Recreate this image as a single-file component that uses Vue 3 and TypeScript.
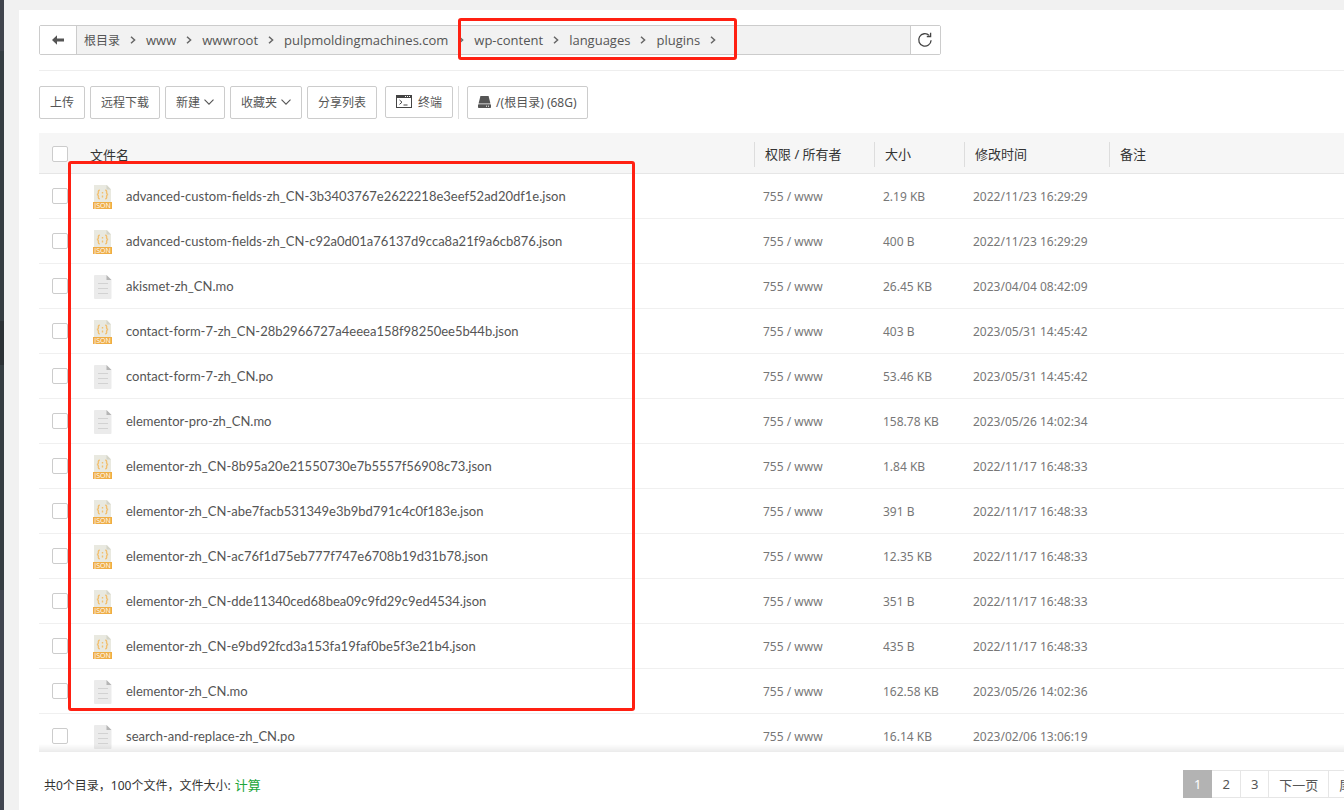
<script setup lang="ts">
import { ref } from 'vue'

interface FileRow {
  name: string
  size: string
  time: string
}

const crumbs: string[] = ['www', 'wwwroot', 'pulpmoldingmachines.com']
const markedCrumbs: string[] = ['wp-content', 'languages', 'plugins']

const files: FileRow[] = [
  { name: 'advanced-custom-fields-zh_CN-3b3403767e2622218e3eef52ad20df1e.json', size: '2.19 KB', time: '2022/11/23 16:29:29' },
  { name: 'advanced-custom-fields-zh_CN-c92a0d01a76137d9cca8a21f9a6cb876.json', size: '400 B', time: '2022/11/23 16:29:29' },
  { name: 'akismet-zh_CN.mo', size: '26.45 KB', time: '2023/04/04 08:42:09' },
  { name: 'contact-form-7-zh_CN-28b2966727a4eeea158f98250ee5b44b.json', size: '403 B', time: '2023/05/31 14:45:42' },
  { name: 'contact-form-7-zh_CN.po', size: '53.46 KB', time: '2023/05/31 14:45:42' },
  { name: 'elementor-pro-zh_CN.mo', size: '158.78 KB', time: '2023/05/26 14:02:34' },
  { name: 'elementor-zh_CN-8b95a20e21550730e7b5557f56908c73.json', size: '1.84 KB', time: '2022/11/17 16:48:33' },
  { name: 'elementor-zh_CN-abe7facb531349e3b9bd791c4c0f183e.json', size: '391 B', time: '2022/11/17 16:48:33' },
  { name: 'elementor-zh_CN-ac76f1d75eb777f747e6708b19d31b78.json', size: '12.35 KB', time: '2022/11/17 16:48:33' },
  { name: 'elementor-zh_CN-dde11340ced68bea09c9fd29c9ed4534.json', size: '351 B', time: '2022/11/17 16:48:33' },
  { name: 'elementor-zh_CN-e9bd92fcd3a153fa19faf0be5f3e21b4.json', size: '435 B', time: '2022/11/17 16:48:33' },
  { name: 'elementor-zh_CN.mo', size: '162.58 KB', time: '2023/05/26 14:02:36' },
  { name: 'search-and-replace-zh_CN.po', size: '16.14 KB', time: '2023/02/06 13:06:19' },
]

const selected = ref<string[]>([])
const page = ref(1)
const isJson = (name: string): boolean => name.endsWith('.json')

function toggleAll(event: Event) {
  const on = (event.target as HTMLInputElement).checked
  selected.value = on ? files.map((f) => f.name) : []
}
</script>

<template>
  <div class="app">
    <aside class="rail">
      <span class="rail-head"></span>
      <span class="rail-upper"></span>
      <span class="rail-active"></span>
      <span class="rail-lower"></span>
      <span class="rail-foot"></span>
    </aside>
    <main class="panel">
      <div class="path-area">
        <div class="path-bar">
          <button class="back" type="button" aria-label="返回上级">
            <svg width="12" height="10" viewBox="0 0 12 10"><path d="M0 5 5 0.3V3.6H12V6.4H5V9.7Z" fill="#555" /></svg>
          </button>
          <nav class="crumbs">
            <span class="crumb root">
              <a href="#">根目录</a>
              <svg class="sep" width="6" height="8" viewBox="0 0 6 8"><path d="M1 0.7 4.6 4 1 7.3" fill="none" stroke="#666" stroke-width="1.5" /></svg>
            </span>
            <span v-for="c in crumbs" :key="c" class="crumb">
              <a href="#">{{ c }}</a>
              <svg class="sep" width="6" height="8" viewBox="0 0 6 8"><path d="M1 0.7 4.6 4 1 7.3" fill="none" stroke="#666" stroke-width="1.5" /></svg>
            </span>
            <span class="marked">
              <span v-for="c in markedCrumbs" :key="c" class="crumb">
                <a href="#">{{ c }}</a>
                <svg class="sep" width="6" height="8" viewBox="0 0 6 8"><path d="M1 0.7 4.6 4 1 7.3" fill="none" stroke="#666" stroke-width="1.5" /></svg>
              </span>
              <span class="mark crumb-mark"></span>
            </span>
          </nav>
          <button class="refresh" type="button" aria-label="刷新">
            <svg width="16" height="16" viewBox="0 0 16 16" fill="none" stroke="#444" stroke-width="1.3">
              <path d="M14.1 8.2A6.2 6.2 0 1 1 12.2 3.4" />
              <path d="M13.6 0.8V4.5H9.8" />
            </svg>
          </button>
        </div>
      </div>

      <div class="toolbar">
        <button type="button">上传</button>
        <button type="button">远程下载</button>
        <button type="button">新建<svg class="caret" width="10" height="6" viewBox="0 0 10 6"><path d="M0.5 0.6 5 5.1 9.5 0.6" fill="none" stroke="#555" stroke-width="1.1" /></svg></button>
        <button type="button">收藏夹<svg class="caret" width="10" height="6" viewBox="0 0 10 6"><path d="M0.5 0.6 5 5.1 9.5 0.6" fill="none" stroke="#555" stroke-width="1.1" /></svg></button>
        <button type="button">分享列表</button>
        <button type="button" class="terminal">
          <svg width="16" height="13" viewBox="0 0 16 13">
            <rect x="0.5" y="0.5" width="15" height="12" fill="#fff" stroke="#444" />
            <rect width="16" height="3" fill="#444" />
            <path d="M9 1.5h1M11 1.5h1M13 1.5h1" stroke="#fff" />
            <path d="M3.5 5 6 7.2 3.5 9.4M7.5 10h4" fill="none" stroke="#444" />
          </svg>
          终端
        </button>
        <span class="divider"></span>
        <button type="button" class="disk">
          <svg width="13" height="12" viewBox="0 0 13 12">
            <path d="M2.4 0H10.6L12.4 7.4H0.6Z" fill="#555" />
            <rect y="8.2" width="13" height="3.8" rx="0.8" fill="#555" />
            <path d="M8 10.2h1M10 10.2h1" stroke="#fff" />
          </svg>
          /(根目录) (68G)
        </button>
      </div>

      <section class="list">
        <div class="scroll">
          <table>
            <colgroup>
              <col class="c-check" /><col /><col class="c-perm" /><col class="c-size" /><col class="c-time" /><col class="c-note" />
            </colgroup>
            <thead>
              <tr>
                <th><input type="checkbox" aria-label="全选" @change="toggleAll" /></th>
                <th class="name-head">文件名</th>
                <th><span class="head">权限 / 所有者</span></th>
                <th><span class="head">大小</span></th>
                <th><span class="head">修改时间</span></th>
                <th><span class="head">备注</span></th>
              </tr>
            </thead>
            <tbody>
              <tr v-for="f in files" :key="f.name">
                <td><input v-model="selected" type="checkbox" :value="f.name" :aria-label="f.name" /></td>
                <td>
                  <a href="#" class="file">
                    <svg v-if="isJson(f.name)" width="20" height="24" viewBox="0 0 20 24">
                      <path d="M1 0H14L18 4.5V24H1Z" fill="#e9e9e0" />
                      <path d="M13.5 0 18 4.5H13.5Z" fill="#d4d4c8" />
                      <g fill="none" stroke="#f2bf70" stroke-width="1.4">
                        <path d="M6.8 5.3H6.4Q5.4 5.3 5.4 6.3V8Q5.4 9.2 4 9.5Q5.4 9.8 5.4 11V12.7Q5.4 13.7 6.4 13.7H6.8" />
                        <path d="M12.2 5.3H12.6Q13.6 5.3 13.6 6.3V8Q13.6 9.2 15 9.5Q13.6 9.8 13.6 11V12.7Q13.6 13.7 12.6 13.7H12.2" />
                        <path d="M9.5 7V8.4M9.5 10.4V12.4" />
                      </g>
                      <rect y="17" width="19" height="7" fill="#efad45" />
                      <text x="9.5" y="23" text-anchor="middle" class="json-tag">JSON</text>
                    </svg>
                    <svg v-else width="20" height="24" viewBox="0 0 20 24">
                      <path d="M2 0H13.5L18.5 5V23Q18.5 24 17.5 24H2Q1 24 1 23V1Q1 0 2 0Z" fill="#ebebeb" />
                      <path d="M13.5 0 18.5 5H13.5Z" fill="#b5b5b5" />
                      <path d="M5 8.5H15M5 13.5H15M5 18.5H15" stroke="#d2d2d2" />
                    </svg>
                    <span>{{ f.name }}</span>
                  </a>
                </td>
                <td>755 / www</td>
                <td>{{ f.size }}</td>
                <td>{{ f.time }}</td>
                <td></td>
              </tr>
            </tbody>
          </table>
        </div>
        <span class="mark list-mark"></span>
      </section>

      <footer class="footer">
        <p>共0个目录，100个文件，文件大小: <a href="#">计算</a></p>
        <nav class="pager">
          <button v-for="n in 3" :key="n" type="button" :class="{ current: n === page }" @click="page = n">{{ n }}</button>
          <button type="button">下一页</button>
          <button type="button">尾页</button>
        </nav>
      </footer>
    </main>
  </div>
</template>

<style>
body {
  margin: 0;
  background: #f1f1f1;
}
</style>

<style scoped>
.app,
.app * {
  box-sizing: border-box;
}
.app {
  display: flex;
  height: 100vh;
  overflow: hidden;
  background: #f1f1f1;
  color: #555;
  font-family: 'Noto Sans', 'Noto Sans CJK SC', sans-serif;
  font-size: 12px;
}
a {
  color: inherit;
  text-decoration: none;
}
button {
  margin: 0;
  font: inherit;
  color: inherit;
  background: #fff;
  border: 1px solid #ccc;
  cursor: pointer;
}
svg {
  flex: none;
}
.rail {
  display: flex;
  flex: none;
  flex-direction: column;
  width: 4px;
}
.rail-head {
  height: 51px;
  background: #40444d;
}
.rail-upper {
  height: 270px;
  background: #353d42;
}
.rail-active {
  height: 44px;
  background: #2c3135;
}
.rail-lower {
  height: 225px;
  background: #353d42;
}
.rail-foot {
  flex: 1;
  background: #40454f;
}
.panel {
  display: flex;
  flex: 1;
  flex-direction: column;
  min-width: 0;
  margin: 10px 0 0 15px;
  padding: 15px 0 0 20px;
  background: #fff;
}
.path-area {
  flex: none;
  padding-bottom: 15px;
  border-bottom: 1px solid #eee;
}
.path-bar {
  display: flex;
  width: 902px;
  max-width: 100%;
  height: 30px;
  background: #f2f2f2;
  border: 1px solid #ccc;
  border-radius: 2px;
}
.back,
.refresh {
  display: flex;
  flex: none;
  align-items: center;
  justify-content: center;
  padding: 0;
  border: 0;
}
.back {
  width: 37px;
  border-right: 1px solid #ccc;
}
.refresh {
  width: 30px;
  padding-right: 1px;
  border-left: 1px solid #ccc;
}
.crumbs {
  display: flex;
  flex: 1;
  align-items: center;
  min-width: 0;
  padding-left: 7px;
  font-family: 'Open Sans', 'Noto Sans CJK SC', sans-serif;
  font-size: 13px;
}
.crumb,
.marked {
  display: flex;
  align-items: center;
  white-space: nowrap;
}
.root {
  font-size: 12px;
}
.sep {
  margin: 0 10px;
}
.marked {
  position: relative;
}
.mark {
  position: absolute;
  border: 3px solid #ff2012;
  border-radius: 3px;
  pointer-events: none;
}
.crumb-mark {
  inset: -13px -11px -11px -16px;
}
.toolbar {
  display: flex;
  flex: none;
  gap: 5px;
  align-items: flex-start;
  padding: 15px 0 14px;
}
.toolbar button {
  display: flex;
  align-items: center;
  height: 33px;
  padding: 0 10px 1px;
  white-space: nowrap;
  border-radius: 2px;
}
.toolbar .caret {
  margin-left: 4px;
}
.toolbar .terminal {
  gap: 6px;
  height: 32px;
  margin-left: 3px;
}
.toolbar .disk {
  gap: 5px;
  margin-left: 3px;
}
.divider {
  width: 1px;
  height: 33px;
  background: #ddd;
}
.list {
  position: relative;
  flex: 1;
  min-height: 0;
}
.scroll {
  height: 100%;
  overflow: hidden;
}
.list::after {
  position: absolute;
  inset: auto 0 0;
  height: 8px;
  content: '';
  background: linear-gradient(rgba(0, 0, 0, 0), rgba(0, 0, 0, 0.08));
}
.list-mark {
  top: 28px;
  bottom: 41px;
  left: 29px;
  width: 567px;
}
table {
  width: 100%;
  table-layout: fixed;
  border-collapse: separate;
  border-spacing: 0;
}
.c-check {
  width: 42px;
}
.c-perm {
  width: 120px;
}
.c-size {
  width: 90px;
}
.c-time {
  width: 145px;
}
.c-note {
  width: 235px;
}
th {
  height: 41px;
  padding: 2px 0 0;
  font-size: 13px;
  font-weight: 400;
  color: #333;
  text-align: left;
  background: #f6f6f6;
  border-bottom: 1px solid #e6e6e6;
}
th.name-head {
  padding-left: 9px;
}
.head {
  display: block;
  padding-left: 10px;
  line-height: 25px;
  border-left: 1px solid #ddd;
}
td {
  height: 45px;
  padding: 0 0 0 9px;
  color: #777;
  white-space: nowrap;
  border-bottom: 1px solid #f0f0f0;
}
th:first-child,
td:first-child {
  padding-left: 13px;
}
input {
  display: block;
  width: 16px;
  height: 16px;
  margin: 0;
  appearance: none;
  background: #fff;
  border: 1px solid #ccc;
  border-radius: 2px;
}
input:checked {
  background: #20a53a;
}
.file {
  display: flex;
  gap: 13px;
  align-items: center;
  padding-left: 3px;
  font-family: Lato, 'Noto Sans CJK SC', sans-serif;
  font-size: 13px;
  color: #555;
}
.file svg {
  margin-top: 1px;
}
.json-tag {
  font-family: 'Open Sans', sans-serif;
  font-size: 7px;
  fill: #fff;
}
.footer {
  display: flex;
  flex: none;
  align-items: center;
  justify-content: space-between;
  height: 58px;
  padding: 0 0 0 5px;
  color: #333;
}
.footer p {
  margin: 0;
  padding-top: 6px;
}
.footer a {
  margin-left: 1px;
  font-size: 13px;
  color: #20a53a;
}
.pager {
  display: flex;
  width: 161px;
  margin-top: 6px;
  overflow: hidden;
}
.pager button {
  flex: none;
  height: 28px;
  padding: 0 10px;
  font-size: 13px;
  color: #555;
  border-color: #e6e6e6;
  border-left-width: 0;
}
.pager .current {
  color: #fff;
  background: #b3b3b3;
  border-color: #b3b3b3;
  border-left-width: 1px;
}
</style>
